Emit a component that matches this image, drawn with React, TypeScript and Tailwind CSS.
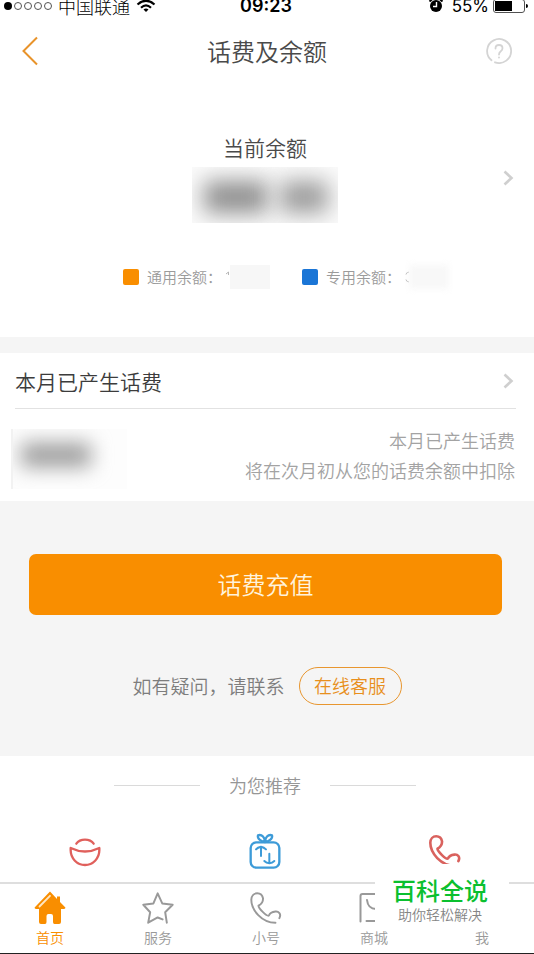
import React from 'react';

const PHONE_PATH =
  'M90 80 C97 66 87 59 78 60 C68 61 60 67 58 72 C52 76 26 50 26 42 C36 37 40 30 40 20 C38 9 31 4 22 4 C12 4 4 12 4 24 C4 55 36 94 78 94';

function PhoneIcon({ width = 6 }: { width?: number }) {
  return (
    <svg viewBox="0 0 98 98" className="size-8" fill="none" stroke="currentColor" strokeWidth={width} strokeLinecap="round" strokeLinejoin="round" aria-hidden="true">
      <path d={PHONE_PATH} />
    </svg>
  );
}

function HomeIcon() {
  return (
    <svg viewBox="0 0 32 34" className="h-[34px] w-8" aria-hidden="true">
      <path d="M16 .5 .6 16.6Q.4 18 2 18H5V31Q5 33 7 33H11Q12.500 33 12.500 31V25Q12.500 23 14.500 23H17Q19 23 19 25V31Q19 33 20.500 33H25Q27 33 27 31V18H30Q31.600 18 31.400 16.600L26 11V5.500H23V8Z" fill="currentColor" />
      <path d="M5.500 15.500 16 4.800" stroke="#ffe7c4" strokeWidth="1.8" strokeLinecap="round" />
    </svg>
  );
}

function StarIcon() {
  return (
    <svg viewBox="0 0 96 98" className="size-8" fill="none" stroke="currentColor" strokeWidth="6" strokeLinecap="round" strokeLinejoin="round" aria-hidden="true">
      <path d="M62 84 47 78 18 94 24 62 3 39 34 35 47 4 61 35 93 39 70 62 75 94" />
    </svg>
  );
}

function MallIcon() {
  return (
    <svg viewBox="0 0 32 32" className="size-8" fill="none" stroke="currentColor" strokeWidth="2" strokeLinecap="round" aria-hidden="true">
      <path d="M2.500 29.500V4Q2.500 2 4.500 2H27Q29 2 29 4V27Q29 29 27 29H8.500M9 8Q10 17 18 17T25 8" />
    </svg>
  );
}

function PersonIcon() {
  return (
    <svg viewBox="0 0 32 32" className="size-8" fill="none" stroke="currentColor" strokeWidth="2" strokeLinecap="round" aria-hidden="true">
      <circle cx="16" cy="9" r="6" />
      <path d="M4 29Q4 18 16 18T28 29" />
    </svg>
  );
}

function BowlIcon() {
  return (
    <svg viewBox="0 0 96 96" className="size-8" fill="none" stroke="currentColor" strokeWidth="7" strokeLinecap="round" strokeLinejoin="round" aria-hidden="true">
      <path d="M22 26A30 24 0 0 1 74 26" />
      <path d="M5 39Q48 60 91 39V46A43 44 0 0 1 5 46Z" />
    </svg>
  );
}

function GiftIcon() {
  return (
    <svg viewBox="0 0 96 108" className="h-9 w-8" fill="none" stroke="currentColor" strokeWidth="7" strokeLinecap="round" strokeLinejoin="round" aria-hidden="true">
      <rect x="5" y="28" width="86" height="76" rx="17" />
      <path d="M48 27C38 27 24 17 27 7C39 3 48 14 48 27C48 14 57 3 69 7C72 17 58 27 48 27" />
      <path d="M36 69V43M21 49Q26 43 36 41Q45 43 51 49M61 62V90M46 84Q52 90 61 91Q70 90 76 84" strokeWidth="6" />
    </svg>
  );
}

function ChevronRight() {
  return (
    <svg viewBox="0 0 12 16" className="h-4 w-3" fill="none" stroke="#cfcfcf" strokeWidth="2.6" aria-hidden="true">
      <path d="m2.500 1.500 7 6.500-7 6.500" />
    </svg>
  );
}

function StatusBar() {
  return (
    <div className="grid h-3 grid-cols-[1fr_auto_1fr] grid-rows-[12px] items-center pr-[6px] pl-1 font-normal text-black">
      <div className="flex items-center gap-[6px]">
        <div className="flex gap-[2px]">
          <span className="size-2 rounded-full bg-black" />
          <span className="size-2 rounded-full border border-neutral-600" />
          <span className="size-2 rounded-full border border-neutral-600" />
          <span className="size-2 rounded-full border border-neutral-600" />
          <span className="size-2 rounded-full border border-neutral-600" />
        </div>
        <span className="text-[18px] leading-5 font-light">中国联通</span>
        <svg viewBox="0 0 20 14" className="h-[14px] w-5" fill="none" stroke="#000" strokeWidth="2.200" aria-hidden="true">
          <path d="M1.500 5.500Q10-2 18.500 5.500M5 8.700Q10 4.200 15 8.700" />
          <path d="m10 13 2.500-2.500Q10 8.500 7.500 10.500Z" fill="#000" stroke="none" />
        </svg>
      </div>
      <span className="font-['Inter','Liberation_Sans',sans-serif] text-[18px] leading-5 font-semibold">09:23</span>
      <div className="flex items-center justify-end">
        <svg viewBox="0 0 16 16" className="mr-2 size-4" aria-hidden="true">
          <circle cx="8" cy="8" r="6" />
          <path d="M1.500 3.500 5 .5M14.500 3.500 11 .5" stroke="#000" strokeWidth="2" />
          <path d="M8.500 4V8.500H5" stroke="#fff" strokeWidth="1.400" fill="none" />
        </svg>
        <span className="mr-1 font-['Inter','Liberation_Sans',sans-serif] text-[17px] leading-5">55%</span>
        <span className="h-[14px] w-8 rounded-[3px] border border-neutral-600 p-px">
          <span className="block h-full w-[17px] bg-black" />
        </span>
        <span className="ml-px h-1 w-[2px] rounded-r bg-black" />
      </div>
    </div>
  );
}

const tabs = [
  { label: '首页', icon: <HomeIcon />, active: true },
  { label: '服务', icon: <StarIcon />, active: false },
  { label: '小号', icon: <PhoneIcon />, active: false },
  { label: '商城', icon: <MallIcon />, active: false },
  { label: '我', icon: <PersonIcon />, active: false },
];

export default function App() {
  return (
    <div className="relative flex min-h-screen flex-col overflow-hidden bg-white font-['Noto_Sans_CJK_SC',sans-serif] font-[350] text-[#4a4a4a]">
      <StatusBar />

      <header className="grid h-[78px] grid-cols-[1fr_auto_1fr] items-center pr-[22px] pl-[22px]">
        <button type="button" aria-label="返回" className="justify-self-start">
          <svg viewBox="0 0 16 30" className="h-[30px] w-4" fill="none" stroke="#e8932a" strokeWidth="2" aria-hidden="true">
            <path d="M15 1.500 1.500 15 15 28.500" />
          </svg>
        </button>
        <h1 className="text-[24px] leading-8">话费及余额</h1>
        <button type="button" aria-label="帮助" className="justify-self-end">
          <svg viewBox="0 0 26 26" className="size-[26px]" fill="none" stroke="#d4d4d4" strokeWidth="1.800" strokeLinecap="round" aria-hidden="true">
            <path d="M5.500 22.300A12 12 0 1 1 9 24.300M2.600 19l.6.900" />
            <path d="M9.500 10.500Q9.500 7 13 7T16.500 10.300Q16.500 12 14.800 13.200Q13 14.500 13 16.500M13 19.300v.2" />
          </svg>
        </button>
      </header>

      <main className="flex flex-col">
        <section className="h-[247px] pt-[43px]">
          <div className="grid grid-cols-[1fr_auto_1fr] items-center pr-5 pl-4">
            <div className="col-start-2 flex flex-col items-center">
              <h2 className="text-[21px] leading-7">当前余额</h2>
              <div className="mt-[6px] flex h-14 w-[146px] items-center gap-3 overflow-hidden bg-[#fbfbfb] pt-1" aria-hidden="true">
                <span className="ml-3 h-8 w-16 rounded bg-[#8f8f8f] blur-[11px]" />
                <span className="h-8 w-12 rounded bg-[#9c9c9c] blur-[11px]" />
              </div>
            </div>
            <button type="button" aria-label="余额详情" className="justify-self-end">
              <ChevronRight />
            </button>
          </div>
          <div className="mt-[42px] flex items-center pl-[123px] text-[15px] leading-6 text-[#9b9b9b]">
            <div className="flex w-[179px] items-center">
              <span className="mr-2 size-4 rounded-[2px] bg-[#f98e00]" />
              <span>通用余额：</span>
              <svg viewBox="0 0 4 12" className="ml-1 h-3 w-1" fill="none" stroke="#b5b5b5" aria-hidden="true">
                <path d="M0 3 2.500 1V4" />
              </svg>
              <span className="h-6 w-10 bg-[#f7f7f7]" />
            </div>
            <div className="flex items-center">
              <span className="mr-2 size-4 rounded-[2px] bg-[#1a75d6]" />
              <span>专用余额：</span>
              <svg viewBox="0 0 4 12" className="ml-1 h-3 w-1" fill="none" stroke="#b5b5b5" aria-hidden="true">
                <path d="M1 3.500Q1 1.500 4 1M1 8.500Q1 10.500 4 11" />
              </svg>
              <span className="h-6 w-10 bg-[#f8f8f8] blur-[3px]" />
            </div>
          </div>
        </section>

        <section className="border-t-[16px] border-[#f5f5f5]">
          <button type="button" className="flex h-[55px] w-full items-center justify-between pr-5 pl-[15px]">
            <span className="text-[21px] leading-7 text-[#3c3c3c]">本月已产生话费</span>
            <ChevronRight />
          </button>
          <div className="mr-[18px] ml-[15px] border-t border-[#e2e2e2]" />
          <div className="flex h-[92px] items-center justify-between pr-[19px] pl-[11px]">
            <div className="mb-3 flex h-[60px] w-[116px] items-center self-end overflow-hidden border-l-2 border-[#f2f2f2] bg-[#fdfdfd] pl-2" aria-hidden="true">
              <span className="mb-2 h-6 w-[70px] rounded bg-[#9c9c9c] blur-[10px]" />
            </div>
            <p className="text-right text-[18px] leading-[30px] text-[#a3a3a3]">
              本月已产生话费
              <br />
              将在次月初从您的话费余额中扣除
            </p>
          </div>
        </section>

        <section className="flex h-[255px] flex-col bg-[#f5f5f5] pt-[53px]">
          <button type="button" className="mr-8 ml-[29px] h-[61px] rounded-[7px] bg-[#f98e00] pb-[2px] text-[24px] leading-8 text-[#fff3dc]">
            话费充值
          </button>
          <div className="mt-[52px] flex items-center justify-center gap-[14px]">
            <span className="text-[19px] leading-7 text-[#7d7d7d]">如有疑问，请联系</span>
            <button type="button" className="h-[38px] w-[103px] rounded-full border border-[#e8962f] pb-[2px] text-[18px] leading-6 text-[#e88f1c]">
              在线客服
            </button>
          </div>
        </section>

        <section>
          <div className="flex h-[58px] items-center justify-center gap-[29px] pr-1">
            <span className="h-px w-[86px] bg-[#dadada]" />
            <h2 className="text-[18px] leading-6 text-[#969696]">为您推荐</h2>
            <span className="h-px w-[86px] bg-[#dadada]" />
          </div>
          <div className="flex h-[68px] items-center justify-between pt-[10px] pr-[73px] pb-1 pl-[69px]">
            <button type="button" aria-label="理财" className="text-[#e0605c]">
              <BowlIcon />
            </button>
            <button type="button" aria-label="流量礼包" className="text-[#3d9bd8]">
              <GiftIcon />
            </button>
            <button type="button" aria-label="通话" className="text-[#d9625e]">
              <PhoneIcon width={8} />
            </button>
          </div>
        </section>
      </main>

      <footer className="relative mt-auto">
        <nav className="flex h-[72px] justify-between border-t-2 border-b border-t-[#dedede] border-b-[#222222] pt-[6px] pr-7 pl-[26px]">
          {tabs.map((tab) => (
            <button
              key={tab.label}
              type="button"
              className={tab.active ? 'flex w-12 flex-col items-center text-[#f98e00]' : 'flex w-12 flex-col items-center text-[#999999]'}
            >
              <span className="flex h-9 items-center">{tab.icon}</span>
              <span className="mt-px text-[14px] leading-5">{tab.label}</span>
            </button>
          ))}
        </nav>
        <aside className="absolute right-[25px] bottom-[24px] flex h-[66px] w-[134px] flex-col items-center bg-white pt-3 pr-1">
          <strong className="text-[24px] leading-7 font-medium text-[#0bc02f]">百科全说</strong>
          <span className="text-[14px] leading-5 text-[#858585]">助你轻松解决</span>
        </aside>
      </footer>
    </div>
  );
}
